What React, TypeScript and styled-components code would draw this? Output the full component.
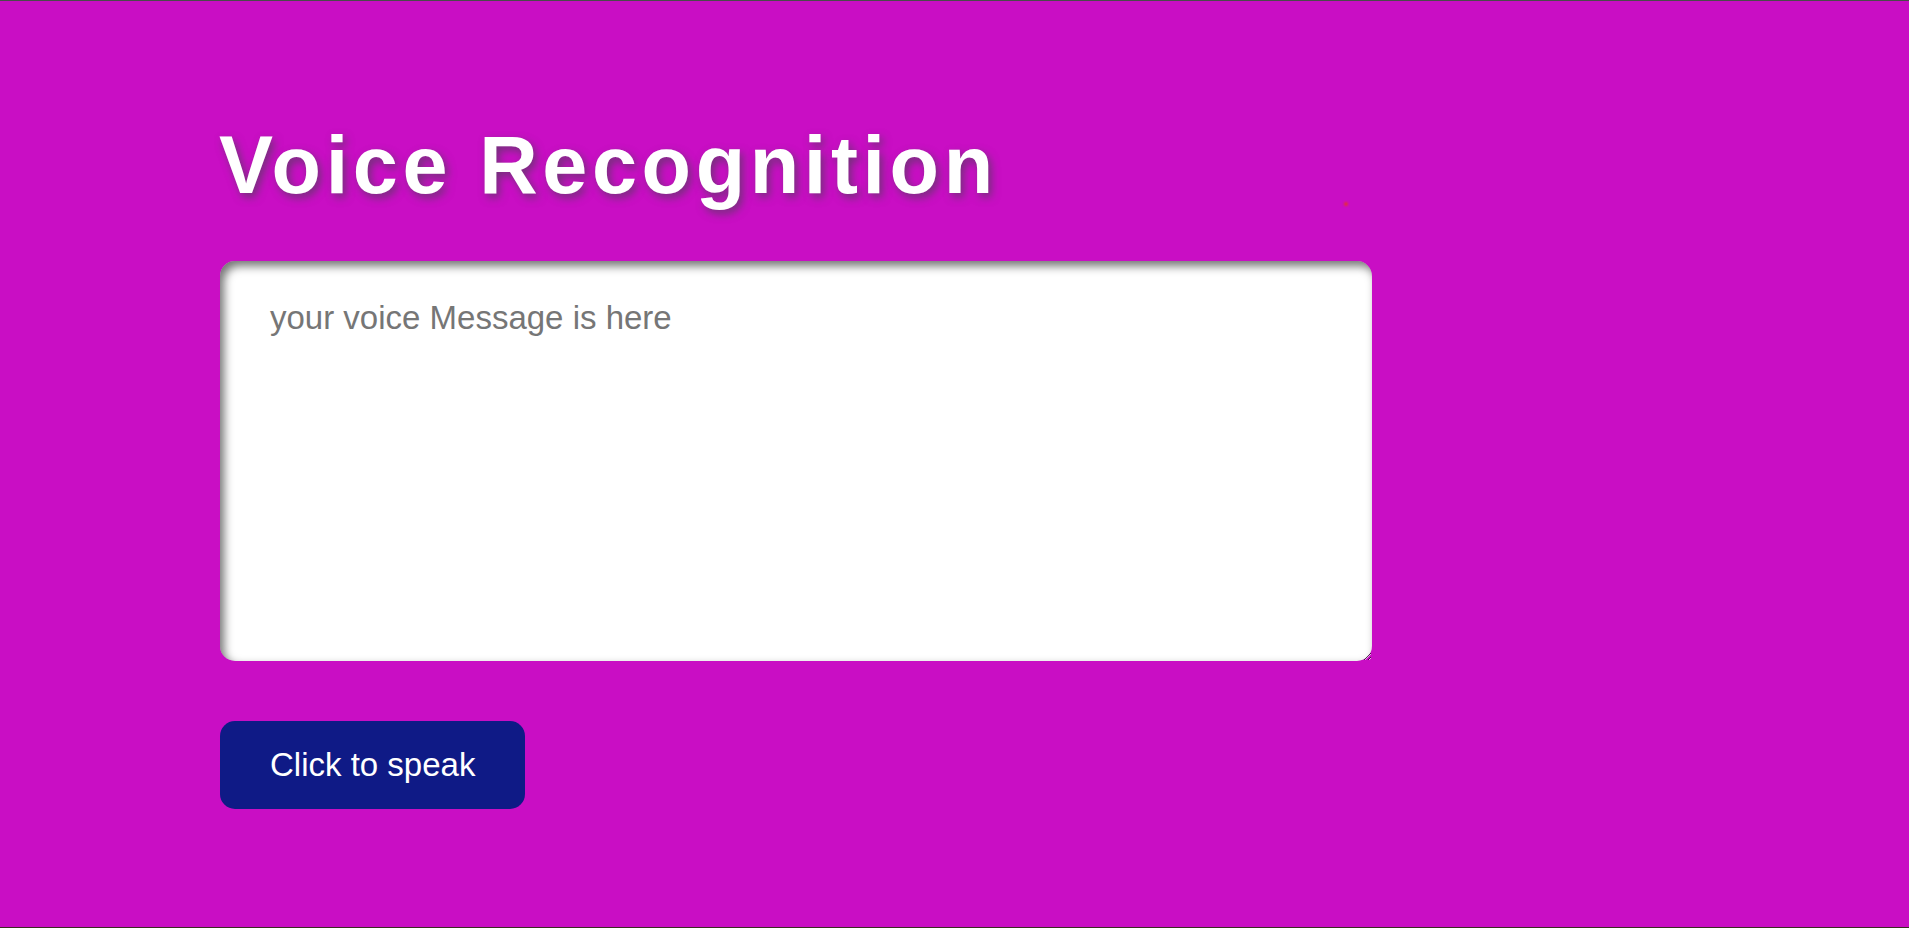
import React from "react";
import styled, { createGlobalStyle } from "styled-components";

const Global = createGlobalStyle`
  html, body { margin: 0; padding: 0; }
  body {
    background: #c90ec4;
    font-family: "Liberation Sans", Arial, sans-serif;
  }
  * { box-sizing: border-box; }
`;

const Page = styled.main`
  position: relative;
  min-height: 100vh;
  border-top: 1px solid #4a4a4a;
  border-bottom: 1px solid #3b2a22;
  padding: 118px 0 0 219px;
  display: flex;
  flex-direction: column;
  align-items: flex-start;
`;

const Title = styled.h1`
  margin: 0;
  color: #ffffff;
  font-family: "Liberation Sans", Arial, sans-serif;
  font-size: 81px;
  font-weight: 700;
  letter-spacing: 4.6px;
  line-height: normal;
  text-shadow: 3px 4px 9px rgba(90, 60, 100, 0.8);
`;

const Message = styled.textarea`
  margin-top: 49px;
  margin-left: 1px;
  width: 1152px;
  height: 400px;
  padding: 38px 50px;
  border: none;
  outline: none;
  border-radius: 15px;
  background: #ffffff;
  box-shadow: inset 4px 5px 10px rgba(0, 0, 0, 0.55);
  font-family: "Liberation Sans", Arial, sans-serif;
  font-size: 33px;
  color: #333;
  resize: both;
  &::placeholder {
    color: #767676;
  }
`;

const SpeakButton = styled.button`
  margin-top: 60px;
  margin-left: 1px;
  padding: 25px 50px;
  border: none;
  border-radius: 15px;
  background: #0f1a86;
  color: #ffffff;
  font-family: "Liberation Sans", Arial, sans-serif;
  font-size: 33px;
  line-height: normal;
  cursor: pointer;
`;

const Dot = styled.span`
  position: absolute;
  left: 1344px;
  top: 201px;
  width: 4px;
  height: 4px;
  border-radius: 50%;
  background: #e8302a;
  filter: blur(1px);
`;

export default function App() {
  return (
    <>
      <Global />
      <Page>
        <Title>Voice Recognition</Title>
        <Message placeholder="your voice Message is here" />
        <SpeakButton>Click to speak</SpeakButton>
        <Dot />
      </Page>
    </>
  );
}
